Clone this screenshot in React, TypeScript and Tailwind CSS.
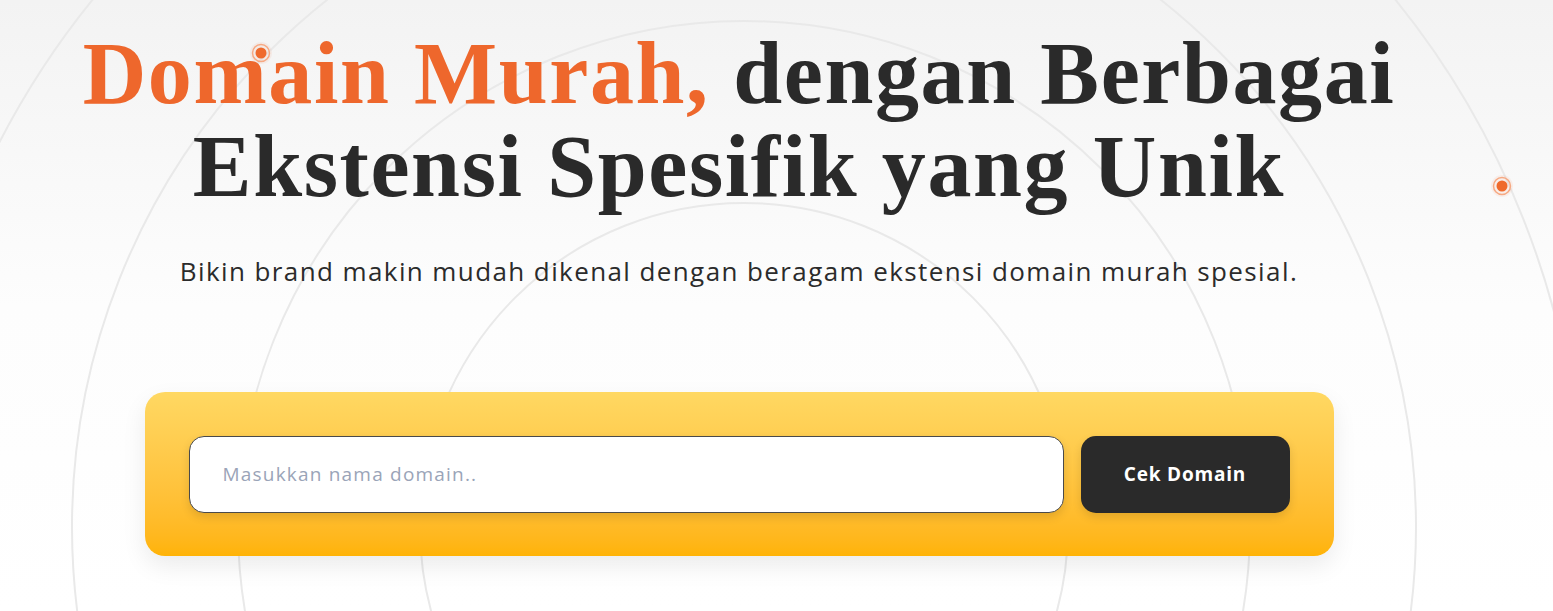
import React from "react";

function Backdrop() {
  const radii = [324, 506, 672, 838];
  return (
    <svg
      className="absolute inset-0 pointer-events-none"
      width="1553"
      height="611"
      viewBox="0 0 1553 611"
    >
      {radii.map((r) => (
        <circle key={r} cx="744" cy="527" r={r} fill="none" stroke="#e9e9e9" strokeWidth="2" />
      ))}
      {[
        [261, 53],
        [1502, 186],
      ].map(([x, y]) => (
        <g key={x}>
          <circle cx={x} cy={y} r="11" fill="#f06a2b" opacity="0.07" />
          <circle cx={x} cy={y} r="8.5" fill="none" stroke="#f6a983" strokeWidth="1.5" />
          <circle cx={x} cy={y} r="5.5" fill="#ef6a2c" />
        </g>
      ))}
    </svg>
  );
}

export default function App() {
  return (
    <div className="relative w-[1553px] h-[611px] overflow-hidden bg-gradient-to-b from-[#f3f3f3] via-[#fdfdfd] to-[#ffffff]">
      <Backdrop />
      <div className="relative w-[1478px] flex flex-col items-center pt-[27px]">
        <h1
          className="text-center text-[88px] leading-[93px] font-bold text-[#2a2a2a] tracking-[1.6px]"
          style={{ fontFamily: '"Liberation Serif", "DejaVu Serif", serif' }}
        >
          <span className="text-[#ee672c]">Domain Murah,</span> dengan Berbagai
          <br />
          Ekstensi Spesifik yang Unik
        </h1>
        <p
          className="mt-[42px] text-[26px] leading-[32px] font-normal text-[#2b2b2b] tracking-[1.4px]"
          style={{ fontFamily: '"Open Sans", Lato, sans-serif' }}
        >
          Bikin brand makin mudah dikenal dengan beragam ekstensi domain murah spesial.
        </p>
        <div className="mt-[105px] w-[1189px] h-[164px] rounded-[20px] bg-gradient-to-b from-[#ffd862] to-[#ffb305] shadow-[0_10px_24px_rgba(0,0,0,0.08)] flex items-center gap-[17px] px-[44px]">
          <div className="flex-1 h-[77px] rounded-[15px] bg-white border border-[#4a4a4a] shadow-[0_4px_10px_rgba(0,0,0,0.12)] flex items-center pl-[33px]">
            <input
              className="w-full bg-transparent outline-none text-[19px] tracking-[1.2px] text-[#333] placeholder:text-[#9aa4b8]"
              style={{ fontFamily: '"Open Sans", Lato, sans-serif' }}
              placeholder="Masukkan nama domain.."
            />
          </div>
          <button
            className="w-[209px] h-[77px] rounded-[15px] bg-[#2a2a2a] text-white text-[19px] font-bold tracking-[0.8px] shadow-[0_4px_10px_rgba(0,0,0,0.12)]"
            style={{ fontFamily: '"Open Sans", Lato, sans-serif' }}
          >
            Cek Domain
          </button>
        </div>
      </div>
    </div>
  );
}
